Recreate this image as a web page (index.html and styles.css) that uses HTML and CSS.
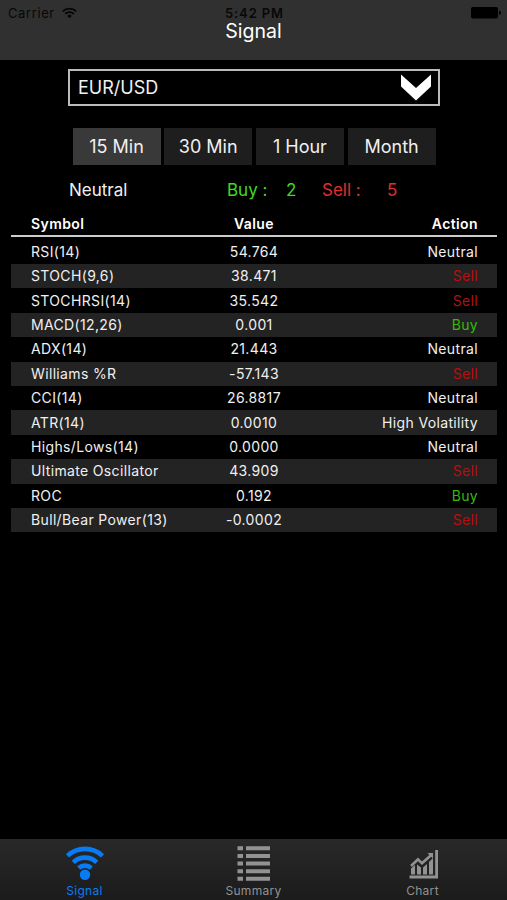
FILE: index.html
```html
<!DOCTYPE html>
<html lang="en">

<head>
    <meta charset="UTF-8" />
    <meta name="viewport" content="width=device-width, initial-scale=1" />
    <title>Signal</title>
    <link rel="stylesheet" href="styles.css">
</head>
<body>
    <header class="header">
        <div class="status-bar">
            <div class="carrier">
                <span>Carrier</span>
                <svg width="15" height="12" viewBox="0 0 15 12" fill="none" stroke="#050505" stroke-width="1.7">
                    <path d="M0.8 4.3a9.6 9.6 0 0 1 13.4 0"></path>
                    <path d="M3.2 6.9a6.1 6.1 0 0 1 8.6 0"></path>
                    <path d="M7.5 11.2L5.2 8.9a3.3 3.3 0 0 1 4.6 0z" fill="#050505" stroke="none"></path>
                </svg>
            </div>
            <span class="clock">5:42 PM</span>
            <div class="battery">
                <svg width="30" height="12" viewBox="0 0 30 12" fill="#000">
                    <rect x="0" y="0" width="27" height="11.5" rx="2"></rect>
                    <path d="M28 3.8a2 2 0 0 1 0 4z"></path>
                </svg>
            </div>
        </div>
        <h1>Signal</h1>
    </header>

    <main class="content">
        <div class="pair-select">
            <span>EUR/USD</span>
            <svg width="30" height="27" viewBox="0 0 30 27" fill="#fff">
                <path d="M0 0.5L15 14L30 0.5V12.5L15 26.5L0 12.5z"></path>
            </svg>
        </div>

        <div class="periods">
            <button class="period active">15 Min</button>
            <button class="period">30 Min</button>
            <button class="period">1 Hour</button>
            <button class="period">Month</button>
        </div>

        <div class="totals">
            <span class="total-state">Neutral</span>
            <span class="total-buy">Buy :</span>
            <span class="total-buy">2</span>
            <span class="total-sell">Sell :</span>
            <span class="total-sell">5</span>
        </div>

        <div class="table">
            <div class="row head"><span>Symbol</span><span>Value</span><span>Action</span></div>
            <div class="row"><span>RSI(14)</span><span>54.764</span><span>Neutral</span></div>
            <div class="row"><span>STOCH(9,6)</span><span>38.471</span><span class="sell">Sell</span></div>
            <div class="row"><span>STOCHRSI(14)</span><span>35.542</span><span class="sell">Sell</span></div>
            <div class="row"><span>MACD(12,26)</span><span>0.001</span><span class="buy">Buy</span></div>
            <div class="row"><span>ADX(14)</span><span>21.443</span><span>Neutral</span></div>
            <div class="row"><span>Williams %R</span><span>-57.143</span><span class="sell">Sell</span></div>
            <div class="row"><span>CCI(14)</span><span>26.8817</span><span>Neutral</span></div>
            <div class="row"><span>ATR(14)</span><span>0.0010</span><span>High Volatility</span></div>
            <div class="row"><span>Highs/Lows(14)</span><span>0.0000</span><span>Neutral</span></div>
            <div class="row"><span>Ultimate Oscillator</span><span>43.909</span><span class="sell">Sell</span></div>
            <div class="row"><span>ROC</span><span>0.192</span><span class="buy">Buy</span></div>
            <div class="row"><span>Bull/Bear Power(13)</span><span>-0.0002</span><span class="sell">Sell</span></div>
        </div>
    </main>

    <nav class="tab-bar">
        <a class="tab active">
            <svg width="40" height="38" viewBox="0 0 40 38" fill="none" stroke="currentColor" stroke-width="4.6">
                <path d="M2.5 11.800a25.500 25.500 0 0 1 35 0"></path>
                <path d="M8.300 18.300a17 17 0 0 1 23.400 0"></path>
                <path d="M13.700 24a9.400 9.400 0 0 1 12.600 0"></path>
                <circle cx="20" cy="30.800" r="5.200" fill="currentColor" stroke="none"></circle>
            </svg>
            <span>Signal</span>
        </a>
        <a class="tab">
            <svg width="40" height="38" viewBox="0 0 40 38" fill="currentColor">
                <path d="M3.500 2.200h5.500v4H3.500zM12 2.200h24v4H12z"></path>
                <path d="M3.500 9.900h5.500v4H3.500zM12 9.900h24v4H12z"></path>
                <path d="M3.500 17.500h5.500v4H3.500zM12 17.500h24v4H12z"></path>
                <path d="M3.500 25.200h5.500v4H3.500zM12 25.200h24v4H12z"></path>
                <path d="M3.500 32.700h5.500v4H3.500zM12 32.700h24v4H12z"></path>
            </svg>
            <span>Summary</span>
        </a>
        <a class="tab">
            <svg width="40" height="38" viewBox="0 0 40 38" fill="currentColor">
                <path d="M32.200 6h2.800v28.500H6.500v-3h25.700z"></path>
                <path d="M8 24.500L12 21v9.500H8zM14 20.500l4 3v7h-4zM20 23.500l4-3.500v10.500h-4zM26 18l4-4v16.500h-4z"></path>
                <path d="M8 22L15 15.300L19 19.300L28 11.300" fill="none" stroke="currentColor" stroke-width="2.600"></path>
                <path d="M24.500 9h5.500v5.500z"></path>
            </svg>
            <span>Chart</span>
        </a>
    </nav>
</body>
</html>
```

FILE: styles.css
```css
* {
    box-sizing: border-box;
}

body {
    margin: 0;
    height: 900px;
    display: flex;
    flex-direction: column;
    font-family: Inter, 'Liberation Sans', sans-serif;
    background: #000;
    color: #f0f0f0;
    overflow: hidden;
}

.header {
    height: 60px;
    background: #303030;
}

.status-bar {
    display: grid;
    grid-template-columns: 1fr auto 1fr;
    align-items: center;
    height: 20px;
    padding: 6px 6px 0 8px;
    font-size: 13px;
    line-height: 14px;
    color: #080808;
}

.carrier {
    display: flex;
    align-items: center;
    gap: 7px;
    letter-spacing: 0.6px;
}

.clock {
    font-weight: 600;
    letter-spacing: 0.9px;
}

.battery {
    display: flex;
    justify-content: flex-end;
}

h1 {
    margin: 0;
    font-weight: 400;
    text-align: center;
    font-size: 19.5px;
    line-height: 22px;
    color: #fff;
}

.content {
    flex: 1;
}

.pair-select {
    display: flex;
    justify-content: space-between;
    align-items: center;
    width: 372px;
    height: 37px;
    margin: 9px 0 0 68px;
    padding: 0 7px 0 8px;
    border: 2px solid #bbb;
    font-size: 18px;
}

.periods {
    display: grid;
    grid-template-columns: repeat(4, 88px);
    gap: 3.7px;
    margin: 22px 0 0 72.5px;
}

.period {
    height: 37px;
    padding: 0;
    border: none;
    background: #1e1e1e;
    color: #f0f0f0;
    font-family: inherit;
    font-size: 18px;
}

.period.active {
    background: #393939;
}

.totals {
    display: grid;
    grid-template-columns: 158px 59px 36px 65px 20px;
    margin-left: 69px;
    height: 50px;
    line-height: 50px;
    font-size: 17px;
}

.total-buy {
    color: #3edb23;
}

.total-sell {
    color: #e02f29;
}

.table {
    margin: 0 10px 0 11px;
}

.row {
    display: grid;
    grid-template-columns: 1fr 120px 1fr;
    align-items: center;
    height: 24.42px;
    padding: 0 19px 0 20px;
    font-size: 14px;
    line-height: 16px;
    letter-spacing: 0.35px;
}

.row span:nth-child(2) {
    padding-right: 1px;
    text-align: center;
}

.row span:nth-child(3) {
    text-align: right;
}

.row:nth-child(odd) {
    background: #232323;
}

.row.head {
    height: 22px;
    padding-bottom: 2px;
    margin-bottom: 2.5px;
    border-bottom: 2px solid #ccc;
    background: none;
    font-weight: 600;
    letter-spacing: 0.4px;
    color: #fff;
}

.sell {
    color: #b51010;
}

.buy {
    color: #37b80c;
}

.tab-bar {
    display: grid;
    grid-template-columns: repeat(3, 1fr);
    height: 61px;
    padding-top: 5px;
    background: linear-gradient(#292929, #1b1b1b);
}

.tab {
    display: flex;
    flex-direction: column;
    align-items: center;
    font-size: 12px;
    line-height: 18px;
    letter-spacing: 0.3px;
    color: #929292;
}

.tab.active {
    color: #087cf5;
}
```
